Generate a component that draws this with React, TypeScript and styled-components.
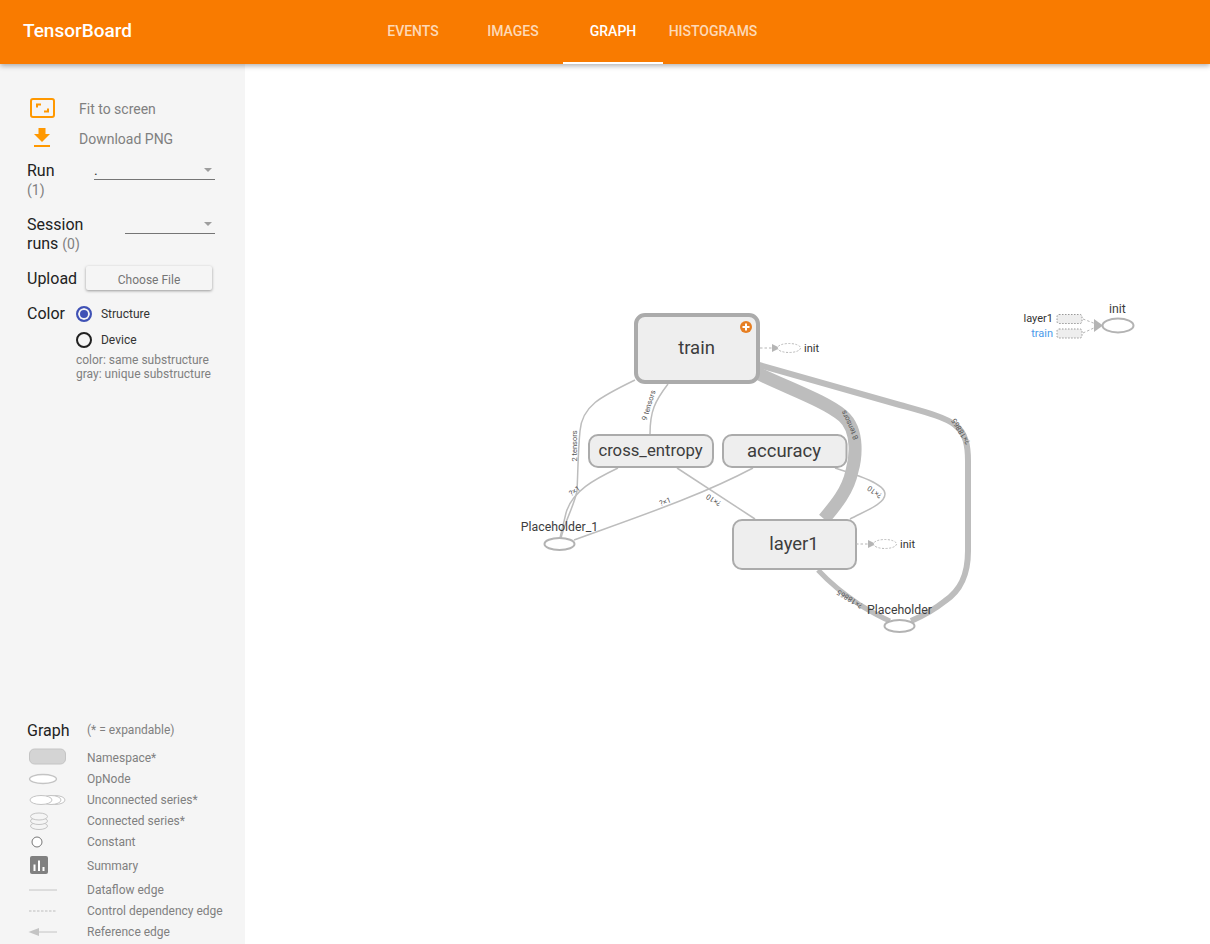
import React from 'react';
import styled, { createGlobalStyle } from 'styled-components';

const GlobalStyle = createGlobalStyle`
  html, body {
    margin: 0;
    height: 100%;
    overflow: hidden;
    background: #fff;
    font-family: Roboto, "Liberation Sans", sans-serif;
  }
  #root { height: 100%; }
`;

const Page = styled.div`
  display: flex;
  flex-direction: column;
  height: 944px;
`;

const Header = styled.header`
  position: relative;
  z-index: 2;
  flex: 0 0 63px;
  display: flex;
  align-items: stretch;
  background: #f97b00;
  box-shadow: 0 2px 5px rgba(0, 0, 0, 0.3);
`;

const Title = styled.div`
  width: 363px;
  padding-left: 23px;
  box-sizing: border-box;
  line-height: 62px;
  font-size: 19px;
  font-weight: 500;
  color: #fff;
`;

const Tab = styled.div<{ $active?: boolean }>`
  width: 100px;
  box-sizing: border-box;
  text-align: center;
  line-height: 62px;
  font-size: 14px;
  font-weight: 500;
  color: ${props => (props.$active ? '#fff' : 'rgba(255, 255, 255, 0.72)')};
  border-bottom: 2px solid ${props => (props.$active ? '#fff' : 'transparent')};
`;

const Body = styled.div`
  flex: 1;
  display: flex;
  min-height: 0;
`;

const Sidebar = styled.aside`
  flex: 0 0 245px;
  width: 245px;
  min-width: 0;
  display: flex;
  flex-direction: column;
  justify-content: space-between;
  box-sizing: border-box;
  padding: 30px 30px 0 27px;
  background: #f5f5f5;
`;

const ActionRow = styled.div`
  display: flex;
  align-items: center;
  height: 30px;
  font-size: 14px;
  color: #808080;
`;

const ActionIcon = styled.svg`
  flex: none;
  width: 30px;
  height: 24px;
  margin-left: 3px;
  margin-right: 19px;
`;

const ActionList = styled.div`
  margin-bottom: 7px;
`;

const FieldRow = styled.div<{ $height: number }>`
  display: flex;
  height: ${props => props.$height}px;
`;

const Label = styled.div`
  font-size: 16px;
  line-height: 19px;
  color: #222;
`;

const Count = styled.span`
  font-size: 14px;
  color: #808080;
`;

const RunLabel = styled(Label)`
  flex: 0 0 67px;
`;

const SessionLabel = styled(Label)`
  flex: 0 0 98px;
`;

const Dropdown = styled.div`
  position: relative;
  flex: 1;
  height: 18px;
  border-bottom: 1px solid #757575;
  font-size: 14px;
  line-height: 18px;
  color: #333;
  &::after {
    content: '';
    position: absolute;
    right: 3px;
    top: 7px;
    border-left: 4px solid transparent;
    border-right: 4px solid transparent;
    border-top: 4px solid #9e9e9e;
  }
`;

const UploadRow = styled.div`
  display: flex;
  align-items: center;
  gap: 9px;
  height: 24px;
  margin-bottom: 14px;
  margin-right: 3px;
`;

const FileButton = styled.div`
  width: 126px;
  height: 24px;
  border-radius: 2px;
  background: #f5f5f5;
  box-shadow: 0 1px 3px rgba(0, 0, 0, 0.38);
  text-align: center;
  font-size: 12px;
  line-height: 29px;
  color: #757575;
`;

const ColorRow = styled.div`
  display: flex;
  gap: 11px;
`;

const RadioColumn = styled.div`
  display: flex;
  flex-direction: column;
  font-size: 12px;
  color: #333;
`;

const RadioRow = styled.div`
  display: flex;
  align-items: center;
  gap: 9px;
  height: 26px;
  margin-top: -3px;
  margin-bottom: 3px;
`;

const Radio = styled.span<{ $checked?: boolean }>`
  box-sizing: border-box;
  width: 16px;
  height: 16px;
  border-radius: 50%;
  border: 2px solid ${props => (props.$checked ? '#3f51b5' : '#212121')};
  background: ${props => (props.$checked ? '#3f51b5' : 'transparent')};
  box-shadow: ${props => (props.$checked ? 'inset 0 0 0 2px #f5f5f5' : 'none')};
`;

const Hint = styled.div`
  font-size: 12px;
  line-height: 14px;
  margin-top: -3px;
  color: #808080;
  white-space: nowrap;
`;

const Legend = styled.div`
  display: flex;
  flex-direction: column;
  padding-bottom: 2px;
`;

const LegendHead = styled.div`
  display: flex;
  align-items: center;
  height: 20px;
  margin-bottom: 7px;
`;

const LegendTitle = styled(Label)`
  flex: 0 0 60px;
`;

const LegendNote = styled.span`
  font-size: 12px;
  color: #808080;
`;

const LegendRow = styled.div<{ $height?: number }>`
  display: flex;
  align-items: center;
  height: ${props => props.$height ?? 21}px;
  font-size: 12px;
  color: #808080;
  white-space: nowrap;
`;

const LegendIcon = styled.svg`
  flex: none;
  width: 60px;
  height: 21px;
  overflow: visible;
`;

const Canvas = styled.main`
  flex: 1;
  min-width: 0;
  background: #fff;
`;

const GraphSvg = styled.svg`
  display: block;
  width: 965px;
  height: 881px;
  font-family: Roboto, "Liberation Sans", sans-serif;
`;

const Edge = styled.path<{ $width?: number }>`
  fill: none;
  stroke: #bdbdbd;
  stroke-width: ${props => props.$width ?? 1.5};
`;

const ControlEdge = styled.path`
  fill: none;
  stroke: #b5b5b5;
  stroke-width: 1;
  stroke-dasharray: 2.5 2;
`;

const Arrow = styled.path`
  fill: #b5b5b5;
`;

const Namespace = styled.rect<{ $selected?: boolean }>`
  fill: #eee;
  stroke: #ababab;
  stroke-width: ${props => (props.$selected ? 4 : 2)};
`;

const NodeName = styled.text<{ $size?: number }>`
  font-size: ${props => props.$size ?? 18.5}px;
  fill: #3d3d3d;
  text-anchor: middle;
`;

const OpNode = styled.ellipse`
  fill: #fff;
  stroke: #b3b3b3;
  stroke-width: 2;
`;

const OpName = styled.text<{ $anchor?: string; $blue?: boolean }>`
  font-size: 11px;
  fill: ${props => (props.$blue ? '#4c9bea' : '#333')};
  text-anchor: ${props => props.$anchor ?? 'start'};
`;

const AuxNode = styled.ellipse`
  fill: #fff;
  stroke: #b9b9b9;
  stroke-width: 1;
  stroke-dasharray: 2 1.5;
`;

const AuxBox = styled.rect`
  fill: #eee;
  stroke: #999;
  stroke-width: 1;
  stroke-dasharray: 1.5 1.5;
`;

const EdgeLabel = styled.text`
  font-size: 7.5px;
  fill: #555;
  text-anchor: middle;
`;

interface EdgeTagProps {
  x: number;
  y: number;
  angle: number;
  text: string;
}

const EdgeTag: React.FC<EdgeTagProps> = ({ x, y, angle, text }) => (
  <EdgeLabel transform={`translate(${x} ${y}) rotate(${angle})`}>{text}</EdgeLabel>
);

const AuxInit: React.FC<{ x: number; y: number }> = ({ x, y }) => (
  <g>
    <ControlEdge d={`M${x} ${y}H${x + 12}`} />
    <Arrow d={`M${x + 12} ${y - 4}L${x + 20} ${y}L${x + 12} ${y + 4}Z`} />
    <AuxNode cx={x + 29} cy={y} rx={11.5} ry={4.5} />
    <OpName x={x + 44} y={y + 4}>init</OpName>
  </g>
);

const Graph: React.FC = () => (
  <GraphSvg viewBox="245 63 965 881">
    <Edge d="M635 379C600 396 582 405 580 430C578 450 578 470 577 490C574 505 565 520 561 537" />
    <Edge d="M618 467C595 478 572 490 566 512L560 537" />
    <Edge d="M668 383C655 400 650 410 650 433" />
    <Edge d="M753 467C700 495 640 515 574 539" />
    <Edge d="M677 467L755 518" />
    <Edge d="M835 467C860 475 885 483 885 493C885 503 865 510 850 518" />
    <Edge $width={13} d="M757 372C790 388 825 400 843 415C860 430 855 460 852 470C848 490 835 505 824 518" />
    <Edge $width={6} d="M759 364L900 404C925 411 945 416 955 424C966 432 968 445 968 460V550C968 575 960 590 945 600C935 608 925 614 911 620" />
    <Edge $width={5} d="M818 569C830 582 842 592 860 604C870 610 880 616 890 620" />

    <EdgeTag x={577} y={445} angle={-90} text="2 tensors" />
    <EdgeTag x={651} y={405} angle={-73} text="9 tensors" />
    <EdgeTag x={576} y={492} angle={-35} text="?×1" />
    <EdgeTag x={666} y={503} angle={-20} text="?×1" />
    <EdgeTag x={715} y={497} angle={213} text="?×10" />
    <EdgeTag x={852} y={423} angle={-115} text="8 tensors" />
    <EdgeTag x={876} y={489} angle={215} text="?×10" />
    <EdgeTag x={963} y={429} angle={-122} text="?×18865" />
    <EdgeTag x={851} y={596} angle={212} text="?×18865" />

    <Namespace $selected x={636} y={314} width={122} height={67} rx={9} />
    <circle cx={746} cy={326} r={6} fill="#e67e22" />
    <path d="M746 322.5V329.5M742.5 326H749.5" stroke="#fff" strokeWidth={2} />
    <NodeName x={696.5} y={353}>train</NodeName>
    <AuxInit x={760} y={347} />

    <Namespace x={589} y={434} width={124} height={32} rx={9} />
    <NodeName $size={16.7} x={650.5} y={455}>cross_entropy</NodeName>
    <Namespace x={723} y={434} width={123.5} height={32} rx={9} />
    <NodeName x={784} y={456}>accuracy</NodeName>
    <Namespace x={733} y={519} width={123} height={49} rx={9} />
    <NodeName x={794} y={549}>layer1</NodeName>
    <AuxInit x={856} y={543} />

    <OpNode cx={559.5} cy={543} rx={15} ry={6} />
    <NodeName $size={12.3} x={559.5} y={530}>Placeholder_1</NodeName>
    <OpNode cx={899.5} cy={625} rx={15} ry={6} />
    <NodeName $size={12.3} x={899.5} y={613}>Placeholder</NodeName>

    <OpName $anchor="end" x={1053} y={321}>layer1</OpName>
    <OpName $anchor="end" $blue x={1053} y={336}>train</OpName>
    <AuxBox x={1057} y={313.5} width={25} height={9} rx={2} />
    <AuxBox x={1057} y={328} width={25} height={9} rx={2} />
    <ControlEdge d="M1083 318L1096 323M1083 332L1096 326" />
    <Arrow d="M1094 318L1103 324.5L1094 331Z" />
    <OpNode cx={1118} cy={324.5} rx={15.5} ry={7} />
    <NodeName $size={12.3} x={1117.5} y={312}>init</NodeName>
  </GraphSvg>
);

const App: React.FC = () => (
  <Page>
    <GlobalStyle />
    <Header>
      <Title>TensorBoard</Title>
      <Tab>EVENTS</Tab>
      <Tab>IMAGES</Tab>
      <Tab $active>GRAPH</Tab>
      <Tab>HISTOGRAMS</Tab>
    </Header>
    <Body>
      <Sidebar>
        <div>
          <ActionList>
            <ActionRow>
              <ActionIcon viewBox="0 0 30 24">
                <rect x="1" y="2" width="23" height="18" rx="2" fill="none" stroke="#ff9800" strokeWidth="2" />
                <path d="M7 10.500V7.500H11M18 11.500V14.500H14" fill="none" stroke="#ff9800" strokeWidth="2" />
              </ActionIcon>
              Fit to screen
            </ActionRow>
            <ActionRow>
              <ActionIcon viewBox="0 0 30 24">
                <path d="M8.500 1H15.500V7H20L12 15L4 7H8.500ZM4 18H20V20H4Z" fill="#ff9800" />
              </ActionIcon>
              Download PNG
            </ActionRow>
          </ActionList>
          <FieldRow $height={54}>
            <RunLabel>Run<br /><Count>(1)</Count></RunLabel>
            <Dropdown>.</Dropdown>
          </FieldRow>
          <FieldRow $height={51}>
            <SessionLabel>Session<br />runs <Count>(0)</Count></SessionLabel>
            <Dropdown />
          </FieldRow>
          <UploadRow>
            <Label>Upload</Label>
            <FileButton>Choose File</FileButton>
          </UploadRow>
          <ColorRow>
            <Label>Color</Label>
            <RadioColumn>
              <RadioRow><Radio $checked />Structure</RadioRow>
              <RadioRow><Radio />Device</RadioRow>
              <Hint>color: same substructure<br />gray: unique substructure</Hint>
            </RadioColumn>
          </ColorRow>
        </div>
        <Legend>
          <LegendHead>
            <LegendTitle>Graph</LegendTitle>
            <LegendNote>(* = expandable)</LegendNote>
          </LegendHead>
          <LegendRow>
            <LegendIcon viewBox="0 0 60 21">
              <rect x="2.500" y="2" width="36" height="15" rx="5" fill="#d4d4d4" stroke="#c4c4c4" />
            </LegendIcon>
            Namespace*
          </LegendRow>
          <LegendRow>
            <LegendIcon viewBox="0 0 60 21">
              <ellipse cx="16" cy="11" rx="13.500" ry="4.500" fill="#fff" stroke="#c4c4c4" strokeWidth="1.300" />
            </LegendIcon>
            OpNode
          </LegendRow>
          <LegendRow>
            <LegendIcon viewBox="0 0 60 21">
              <ellipse cx="28" cy="11" rx="10" ry="4.500" fill="#fff" stroke="#c4c4c4" />
              <ellipse cx="24" cy="11" rx="10" ry="4.500" fill="#fff" stroke="#c4c4c4" />
              <ellipse cx="14" cy="11" rx="11" ry="4.500" fill="#fff" stroke="#c4c4c4" />
            </LegendIcon>
            Unconnected series*
          </LegendRow>
          <LegendRow>
            <LegendIcon viewBox="0 0 60 21">
              <ellipse cx="12" cy="16" rx="8.500" ry="3.500" fill="#f5f5f5" stroke="#c4c4c4" />
              <ellipse cx="12" cy="11" rx="8.500" ry="3.500" fill="#f5f5f5" stroke="#c4c4c4" />
              <ellipse cx="12" cy="6.500" rx="8.500" ry="3.500" fill="#f5f5f5" stroke="#c4c4c4" />
            </LegendIcon>
            Connected series*
          </LegendRow>
          <LegendRow>
            <LegendIcon viewBox="0 0 60 21">
              <circle cx="10" cy="11" r="5" fill="#fff" stroke="#777" />
            </LegendIcon>
            Constant
          </LegendRow>
          <LegendRow $height={27}>
            <LegendIcon viewBox="0 0 60 21">
              <rect x="3" y="1" width="18" height="18" rx="2" fill="#808080" />
              <path d="M6.500 9.500H8.500V16H6.500ZM11 5.500H13V16H11ZM15.500 12H17.500V16H15.500Z" fill="#fff" />
            </LegendIcon>
            Summary
          </LegendRow>
          <LegendRow>
            <LegendIcon viewBox="0 0 60 21">
              <path d="M2 11H30" stroke="#c4c4c4" />
            </LegendIcon>
            Dataflow edge
          </LegendRow>
          <LegendRow>
            <LegendIcon viewBox="0 0 60 21">
              <path d="M2 11H30" stroke="#bdbdbd" strokeDasharray="2.500 1.500" />
            </LegendIcon>
            Control dependency edge
          </LegendRow>
          <LegendRow>
            <LegendIcon viewBox="0 0 60 21">
              <path d="M12 11H30" stroke="#c4c4c4" />
              <path d="M1.500 11L12 7V15Z" fill="#c4c4c4" />
            </LegendIcon>
            Reference edge
          </LegendRow>
        </Legend>
      </Sidebar>
      <Canvas>
        <Graph />
      </Canvas>
    </Body>
  </Page>
);

export default App;
